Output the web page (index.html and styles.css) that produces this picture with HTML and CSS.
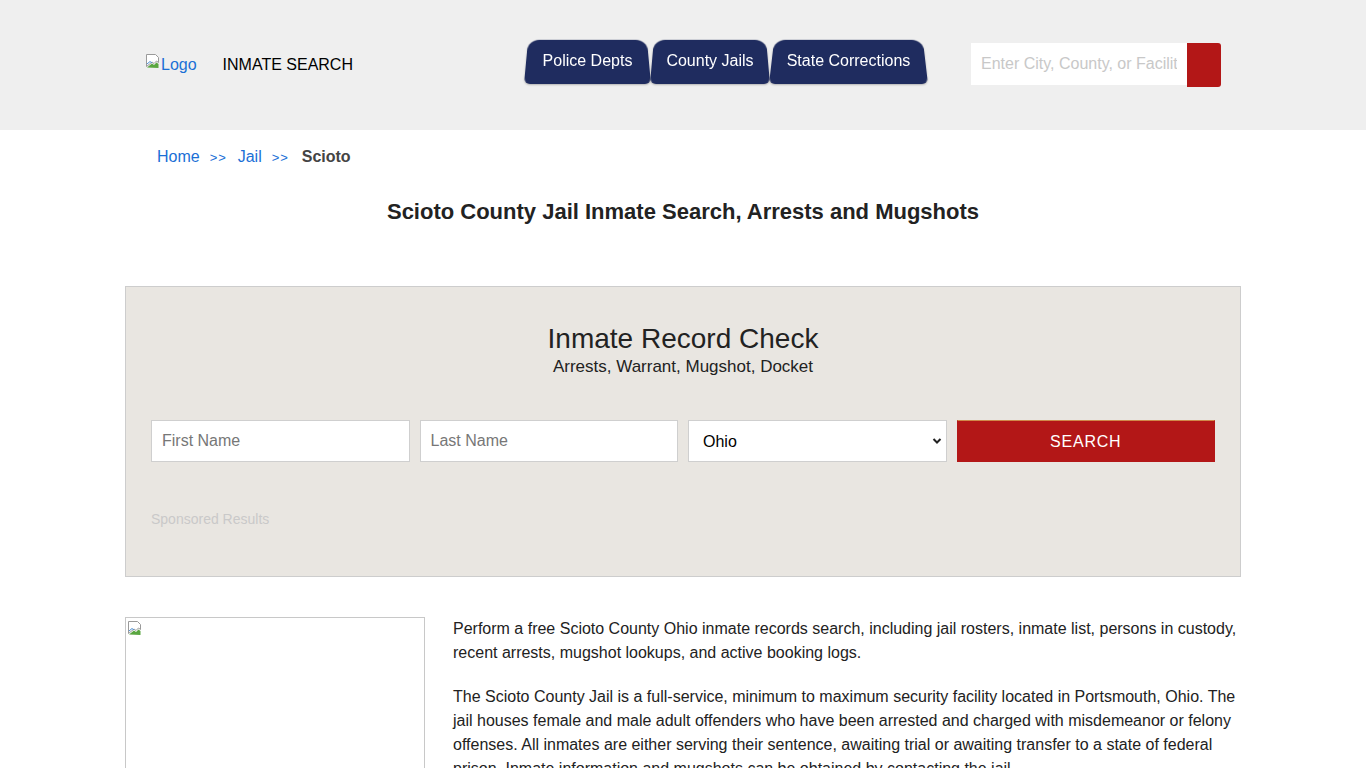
FILE: index.html
```html
<!DOCTYPE html>
<html lang="en">
<head>
<meta charset="utf-8">
<title>Scioto County Jail Inmate Search, Arrests and Mugshots</title>
<link rel="stylesheet" href="styles.css">
</head>
<body>
<header class="site-header">
  <div class="header-inner">
    <a class="brand" href="#">
      <span class="broken-img">
        <svg width="16" height="16" viewBox="0 0 16 16"><path d="M1.5 1.5h9l3 3v5l-2-1.5-2.5 2.5-2-1.5-5.5 4.5z" fill="#fff" stroke="#9a9a9a"/><path d="M2 14.5l5-4 2 1.5 2.5-2.5 2 1.5v4z" fill="#5aa640"/><path d="M2 11l3-2.5 2 1.5" fill="none" stroke="#4b8fd6"/></svg>Logo
      </span>
      <span class="brand-name">INMATE SEARCH</span>
    </a>
    <nav class="tabs">
      <a class="tab" href="#">Police Depts</a>
      <a class="tab" href="#">County Jails</a>
      <a class="tab" href="#">State Corrections</a>
    </nav>
    <form class="top-search">
      <input type="text" placeholder="Enter City, County, or Facility">
      <button type="button" class="top-search-btn" aria-label="Search"></button>
    </form>
  </div>
</header>

<main class="container">
  <div class="breadcrumb">
    <a href="#">Home</a><span class="sep">&gt;&gt;</span><a href="#">Jail</a><span class="sep">&gt;&gt;</span><strong>Scioto</strong>
  </div>

  <h1 class="page-title">Scioto County Jail Inmate Search, Arrests and Mugshots</h1>

  <section class="record-box">
    <h2 class="record-title">Inmate Record Check</h2>
    <p class="record-sub">Arrests, Warrant, Mugshot, Docket</p>
    <form class="record-form">
      <input type="text" placeholder="First Name">
      <input type="text" placeholder="Last Name">
      <div class="select-wrap">
        <select>
          <option>Ohio</option>
        </select>
        <svg class="chev" width="10" height="8" viewBox="0 0 10 8"><path d="M1.5 2l3.5 3.5 3.5-3.5" fill="none" stroke="#222" stroke-width="2"/></svg>
      </div>
      <button type="button" class="search-btn">SEARCH</button>
    </form>
    <p class="sponsored">Sponsored Results</p>
  </section>

  <section class="intro">
    <div class="jail-img">
      <svg width="16" height="16" viewBox="0 0 16 16"><path d="M1.5 1.5h9l3 3v5l-2-1.5-2.5 2.5-2-1.5-5.5 4.5z" fill="#fff" stroke="#9a9a9a"/><path d="M2 14.5l5-4 2 1.5 2.5-2.5 2 1.5v4z" fill="#5aa640"/><path d="M2 11l3-2.5 2 1.5" fill="none" stroke="#4b8fd6"/></svg>
    </div>
    <div class="intro-text">
      <p>Perform a free Scioto County Ohio inmate records search, including jail rosters, inmate list, persons in custody, recent arrests, mugshot lookups, and active booking logs.</p>
      <p>The Scioto County Jail is a full-service, minimum to maximum security facility located in Portsmouth, Ohio. The jail houses female and male adult offenders who have been arrested and charged with misdemeanor or felony offenses. All inmates are either serving their sentence, awaiting trial or awaiting transfer to a state of federal prison. Inmate information and mugshots can be obtained by contacting the jail.</p>
    </div>
  </section>
</main>
</body>
</html>
```

FILE: styles.css
```css
* { box-sizing: border-box; }
html, body { margin: 0; padding: 0; }
body {
  font-family: "Liberation Sans", Arial, sans-serif;
  font-size: 16px;
  color: #222;
  background: #fff;
}
a { text-decoration: none; }

.site-header {
  background: #efefef;
  height: 130px;
}
.header-inner {
  width: 1076px;
  margin: 0 auto;
  height: 100%;
  display: flex;
  align-items: center;
}
.brand {
  display: flex;
  align-items: center;
  color: #000;
}
.broken-img {
  display: inline-flex;
  align-items: flex-start;
  color: #1a6fd6;
  font-size: 16px;
  line-height: 18px;
}
.broken-img svg { margin-top: -3px; }
.brand-name {
  margin-left: 26px;
  font-size: 16px;
  color: #000;
}
.tabs {
  display: flex;
  margin-left: 171px;
  margin-top: -7px;
}
.tab {
  position: relative;
  z-index: 0;
  color: #fff;
  font-size: 16px;
  height: 44px;
  line-height: 42px;
  margin-right: -1px;
  padding: 0;
  text-align: center;
}
.tab::before {
  content: "";
  position: absolute;
  left: 0; right: 0; bottom: 0;
  top: -4px;
  z-index: -1;
  background: #1f2c5f;
  border-radius: 12px 12px 6px 6px;
  transform: perspective(120px) rotateX(10deg);
  transform-origin: bottom;
  box-shadow: 0 1px 2px rgba(0,0,0,0.25);
}
.tab:nth-child(1) { width: 127px; }
.tab:nth-child(2) { width: 120px; }
.tab:nth-child(3) { width: 159px; }

.top-search {
  display: flex;
  margin-left: auto;
  margin-top: -1px;
}
.top-search input {
  width: 216px;
  height: 42px;
  border: none;
  background: #fff;
  font-family: inherit;
  font-size: 16px;
  padding: 0 10px;
  outline: none;
}
.top-search input::placeholder { color: #c8c8c8; }
.top-search-btn {
  width: 34px;
  height: 44px;
  border: none;
  background: #b31717;
  border-radius: 0 3px 3px 0;
  padding: 0;
}

.container {
  width: 1116px;
  margin: 0 auto;
}
.breadcrumb {
  padding: 17px 0 0 32px;
  height: 36px;
  line-height: 20px;
  font-size: 16px;
}
.breadcrumb a { color: #1a6fd6; }
.breadcrumb .sep {
  display: inline-block;
  width: 18px;
  color: #1a6fd6;
  font-size: 13px;
  letter-spacing: 1px;
  margin: 0 10px;
}
.breadcrumb strong { color: #444; margin-left: 2px; }

.page-title {
  text-align: center;
  font-size: 22px;
  line-height: 26px;
  margin: 33px 0 0;
  color: #222;
}

.record-box {
  margin-top: 61px;
  background: #e9e6e1;
  border: 1px solid #cdcdcd;
  padding: 36px 25px 49px;
  text-align: center;
}
.record-title {
  font-size: 28px;
  line-height: 32px;
  font-weight: normal;
  margin: 0;
  color: #222;
}
.record-sub {
  margin: 2px 0 0;
  font-size: 17px;
  line-height: 20px;
}
.record-form {
  margin-top: 43px;
  display: grid;
  grid-template-columns: repeat(4, 1fr);
  gap: 10px;
}
.record-form input,
.record-form select {
  width: 100%;
  height: 42px;
  border: 1px solid #cfcfcf;
  background: #fff;
  font-family: inherit;
  font-size: 16px;
  padding: 0 10px;
  color: #000;
  outline: none;
}
.record-form input::placeholder { color: #777; }
.select-wrap { position: relative; }
.record-form select {
  appearance: none;
  -webkit-appearance: none;
  padding-left: 14px;
  border-radius: 0;
}
.chev {
  position: absolute;
  right: 5px;
  top: 17px;
}
.search-btn {
  height: 42px;
  border: 1px solid #b31717;
  border-top-color: #d08a4a;
  background: #b31717;
  color: #fff;
  font-family: inherit;
  font-size: 16px;
  letter-spacing: 0.8px;
  padding-top: 2px;
}
.sponsored {
  text-align: left;
  margin: 49px 0 0;
  font-size: 14px;
  line-height: 16px;
  color: #c9c9c9;
}

.intro {
  margin-top: 40px;
  display: flex;
  align-items: flex-start;
}
.jail-img {
  flex: 0 0 300px;
  height: 300px;
  border: 1px solid #c8c8c8;
  padding: 2px 1px;
}
.intro-text {
  margin-left: 28px;
  line-height: 24px;
  color: #222;
}
.intro-text p { margin: 0 0 20px; }
```
